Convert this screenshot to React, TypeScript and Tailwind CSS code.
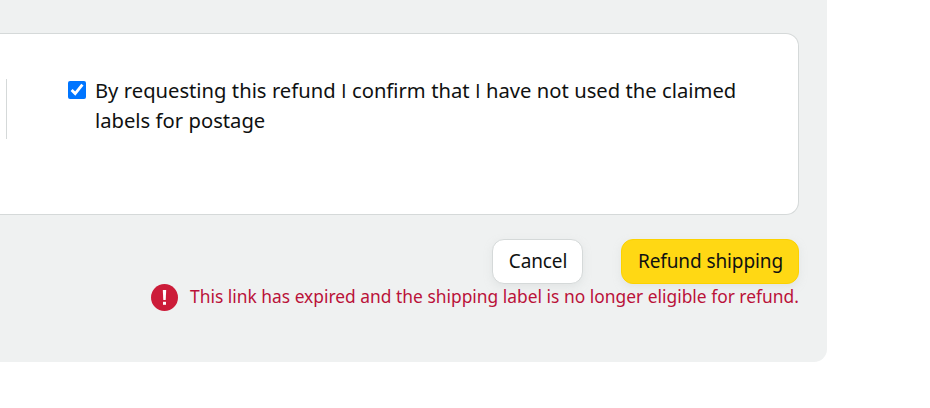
import { useState } from "react";

function Divider() {
  return <div className="w-px h-[60px] bg-[#d5d9d9] shrink-0" />;
}

function PlainI() {
  return <span className="font-['Open_Sans',sans-serif]">I</span>;
}

function ErrorIcon() {
  return (
    <svg viewBox="0 0 27 27" className="w-[27px] h-[27px] shrink-0">
      <circle cx="13.5" cy="13.5" r="13.5" fill="#cc1c39" />
      <path d="M11.8 6h3.4l-.5 10h-2.4z" fill="#fff" />
      <rect x="12" y="17.8" width="3" height="3" fill="#fff" />
    </svg>
  );
}

export default function App() {
  const [confirmed, setConfirmed] = useState(true);

  return (
    <div className="w-full h-[408px] overflow-hidden bg-white font-['Noto_Sans',sans-serif] text-[#0f1111]">
      <div className="w-[827px] h-[362px] pt-[33px] pr-7 bg-[#eff1f1] rounded-br-[13px]">
        <div className="h-[182px] pt-[45px] pl-[6px] flex items-start bg-white border border-l-0 border-[#d5d9d9] rounded-r-[13px]">
          <Divider />
          <label className="ml-[61px] flex items-start">
            <input
              type="checkbox"
              checked={confirmed}
              onChange={(e) => setConfirmed(e.target.checked)}
              className="w-[18px] h-[18px] mt-[2px] shrink-0 accent-[#0075ff]"
            />
            <span className="ml-[9px] -mt-1 text-[20.2px] leading-[30px] [word-spacing:0.15px] whitespace-nowrap">
              By requesting this refund <PlainI /> confirm that <PlainI /> have not used the claimed
              <br />
              labels for postage
            </span>
          </label>
        </div>

        <div className="mt-6 flex justify-end gap-[38px] text-[19px] tracking-[-0.1px] leading-[43px]">
          <button className="w-[91px] h-[45px] pl-px bg-white border border-[#d5d9d9] rounded-[12px] shadow-[0_3px_7px_rgba(213,217,217,0.5)] whitespace-nowrap">Cancel</button>
          <button disabled={!confirmed} className="w-[178px] h-[45px] pl-px bg-[#ffd814] border border-[#fcd200] rounded-[12px] shadow-[0_3px_7px_rgba(213,217,217,0.5)] whitespace-nowrap">Refund shipping</button>
        </div>

        <div className="h-[27px] flex items-center justify-end text-[#ba1239]">
          <ErrorIcon />
          <span className="w-[609px] ml-3 pb-[2px] text-[17.4px] leading-[25px] whitespace-nowrap">This link has expired and the shipping label is no longer eligible for refund.</span>
        </div>
      </div>
    </div>
  );
}
